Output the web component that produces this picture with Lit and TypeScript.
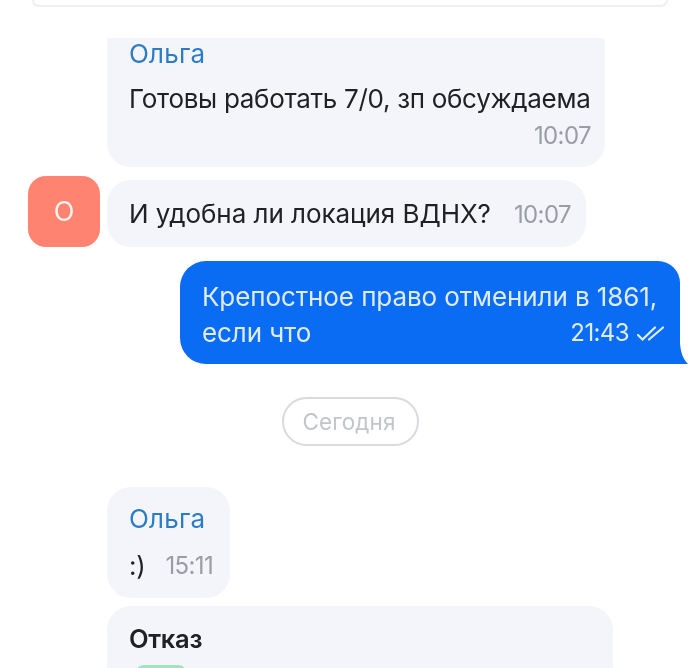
import { LitElement, html, css } from "lit";
import { customElement } from "lit/decorators.js";

@customElement("app-root")
export class AppRoot extends LitElement {
  static styles = css`
    :host { display: block; width: 700px; height: 668px; overflow: hidden; background: #fff; filter: blur(0.5px);
      font-family: Inter, "Noto Sans", sans-serif; color: #202126; font-size: 26px; letter-spacing: -0.3px; }
    .top { box-sizing: border-box; height: 7px; margin: 0 32px 31px; border: 2px solid #eeeff1; border-top: 0; border-radius: 0 0 16px 16px; }
    .in { background: #f4f5fa; box-sizing: border-box; }
    .name { color: #2b7cc4; line-height: 30px; letter-spacing: 0.2px; }
    .time { color: #9a9da3; font-size: 24px; line-height: 26px; letter-spacing: -0.6px; }
    .m1 { width: 498px; height: 129px; margin-left: 107px; padding: 1px 14px 0 22px; border-radius: 0 4px 24px 24px; display: flex; flex-direction: column; }
    .m1 .text { line-height: 30px; margin-top: 15px; white-space: nowrap; }
    .m1 .time { align-self: flex-end; margin-top: 9px; }
    .row2 { display: flex; align-items: flex-end; margin: 9px 0 14px 28px; gap: 7px; }
    .avatar { width: 72px; height: 71px; border-radius: 18px; background: #ff8370; color: #fff3ee; display: grid; place-items: center; font-size: 27px; }
    .m2 { width: 479px; height: 67px; border-radius: 24px; padding: 0 15px 0 22px; display: flex; align-items: center; justify-content: space-between; white-space: nowrap; letter-spacing: -0.05px; }
    .m2 .time { margin-top: 3px; }
    .wrap { position: relative; width: 508px; height: 103px; margin-left: 180px; }
    .m3 { box-sizing: border-box; width: 500px; height: 103px; background: #0a6bf3; color: #dfecff; border-radius: 26px 22px 0 26px; padding: 18px 16px 0 22px; line-height: 36px; white-space: nowrap; letter-spacing: -0.1px; }
    .l2 { display: flex; justify-content: space-between; align-items: center; }
    .stamp { display: flex; align-items: center; gap: 8px; font-size: 24px; letter-spacing: -0.6px; }
    .tail { position: absolute; right: 0; bottom: 0; width: 8px; height: 20px; }
    .pill-row { display: flex; margin: 33px 0 41px 282px; }
    .pill { box-sizing: border-box; width: 137px; height: 49px; padding-right: 3px; border: 2px solid #d8dadd; border-radius: 25px; color: #c2c5c9; font-size: 22.5px; display: grid; place-items: center; letter-spacing: 0.1px; }
    .m4 { width: 123px; height: 111px; margin-left: 107px; border-radius: 24px; padding: 17px 0 0 22px; }
    .m4 .row { display: flex; align-items: center; gap: 20px; margin-top: 19px; line-height: 26px; }
    .m5 { width: 506px; height: 80px; margin: 8px 0 0 107px; border-radius: 24px 24px 0 0; padding: 18px 0 0 22px; }
    .m5 b { display: block; font-weight: 600; line-height: 30px; font-size: 25.5px; }
    .bar { width: 48px; height: 8px; margin: 11px 0 0 8px; border-radius: 6px 6px 0 0; background: #9fe5bd; }
  `;

  render() {
    return html`
      <div class="top"></div>
      <div class="in m1">
        <div class="name">Ольга</div>
        <div class="text">Готовы работать 7/0, зп обсуждаема</div>
        <div class="time">10:07</div>
      </div>
      <div class="row2">
        <div class="avatar">О</div>
        <div class="in m2"><span>И удобна ли локация ВДНХ?</span><span class="time">10:07</span></div>
      </div>
      <div class="wrap">
        <div class="m3">
          <div>Крепостное право отменили в 1861,</div>
          <div class="l2">
            <span>если что</span>
            <span class="stamp">21:43
              <svg width="27" height="15" viewBox="0 0 27 15" fill="none" stroke="#dfecff" stroke-width="2.2" stroke-linecap="round">
                <path d="M1 9L5.5 13.5L18 1.5M12 13.5L26 1.5" />
              </svg>
            </span>
          </div>
        </div>
        <svg class="tail" viewBox="0 0 8 20"><path d="M0 0C1 9 3 15 8 20H0Z" fill="#0a6bf3" /></svg>
      </div>
      <div class="pill-row"><div class="pill">Сегодня</div></div>
      <div class="in m4">
        <div class="name">Ольга</div>
        <div class="row"><span>:)</span><span class="time">15:11</span></div>
      </div>
      <div class="in m5">
        <b>Отказ</b>
        <div class="bar"></div>
      </div>
    `;
  }
}
